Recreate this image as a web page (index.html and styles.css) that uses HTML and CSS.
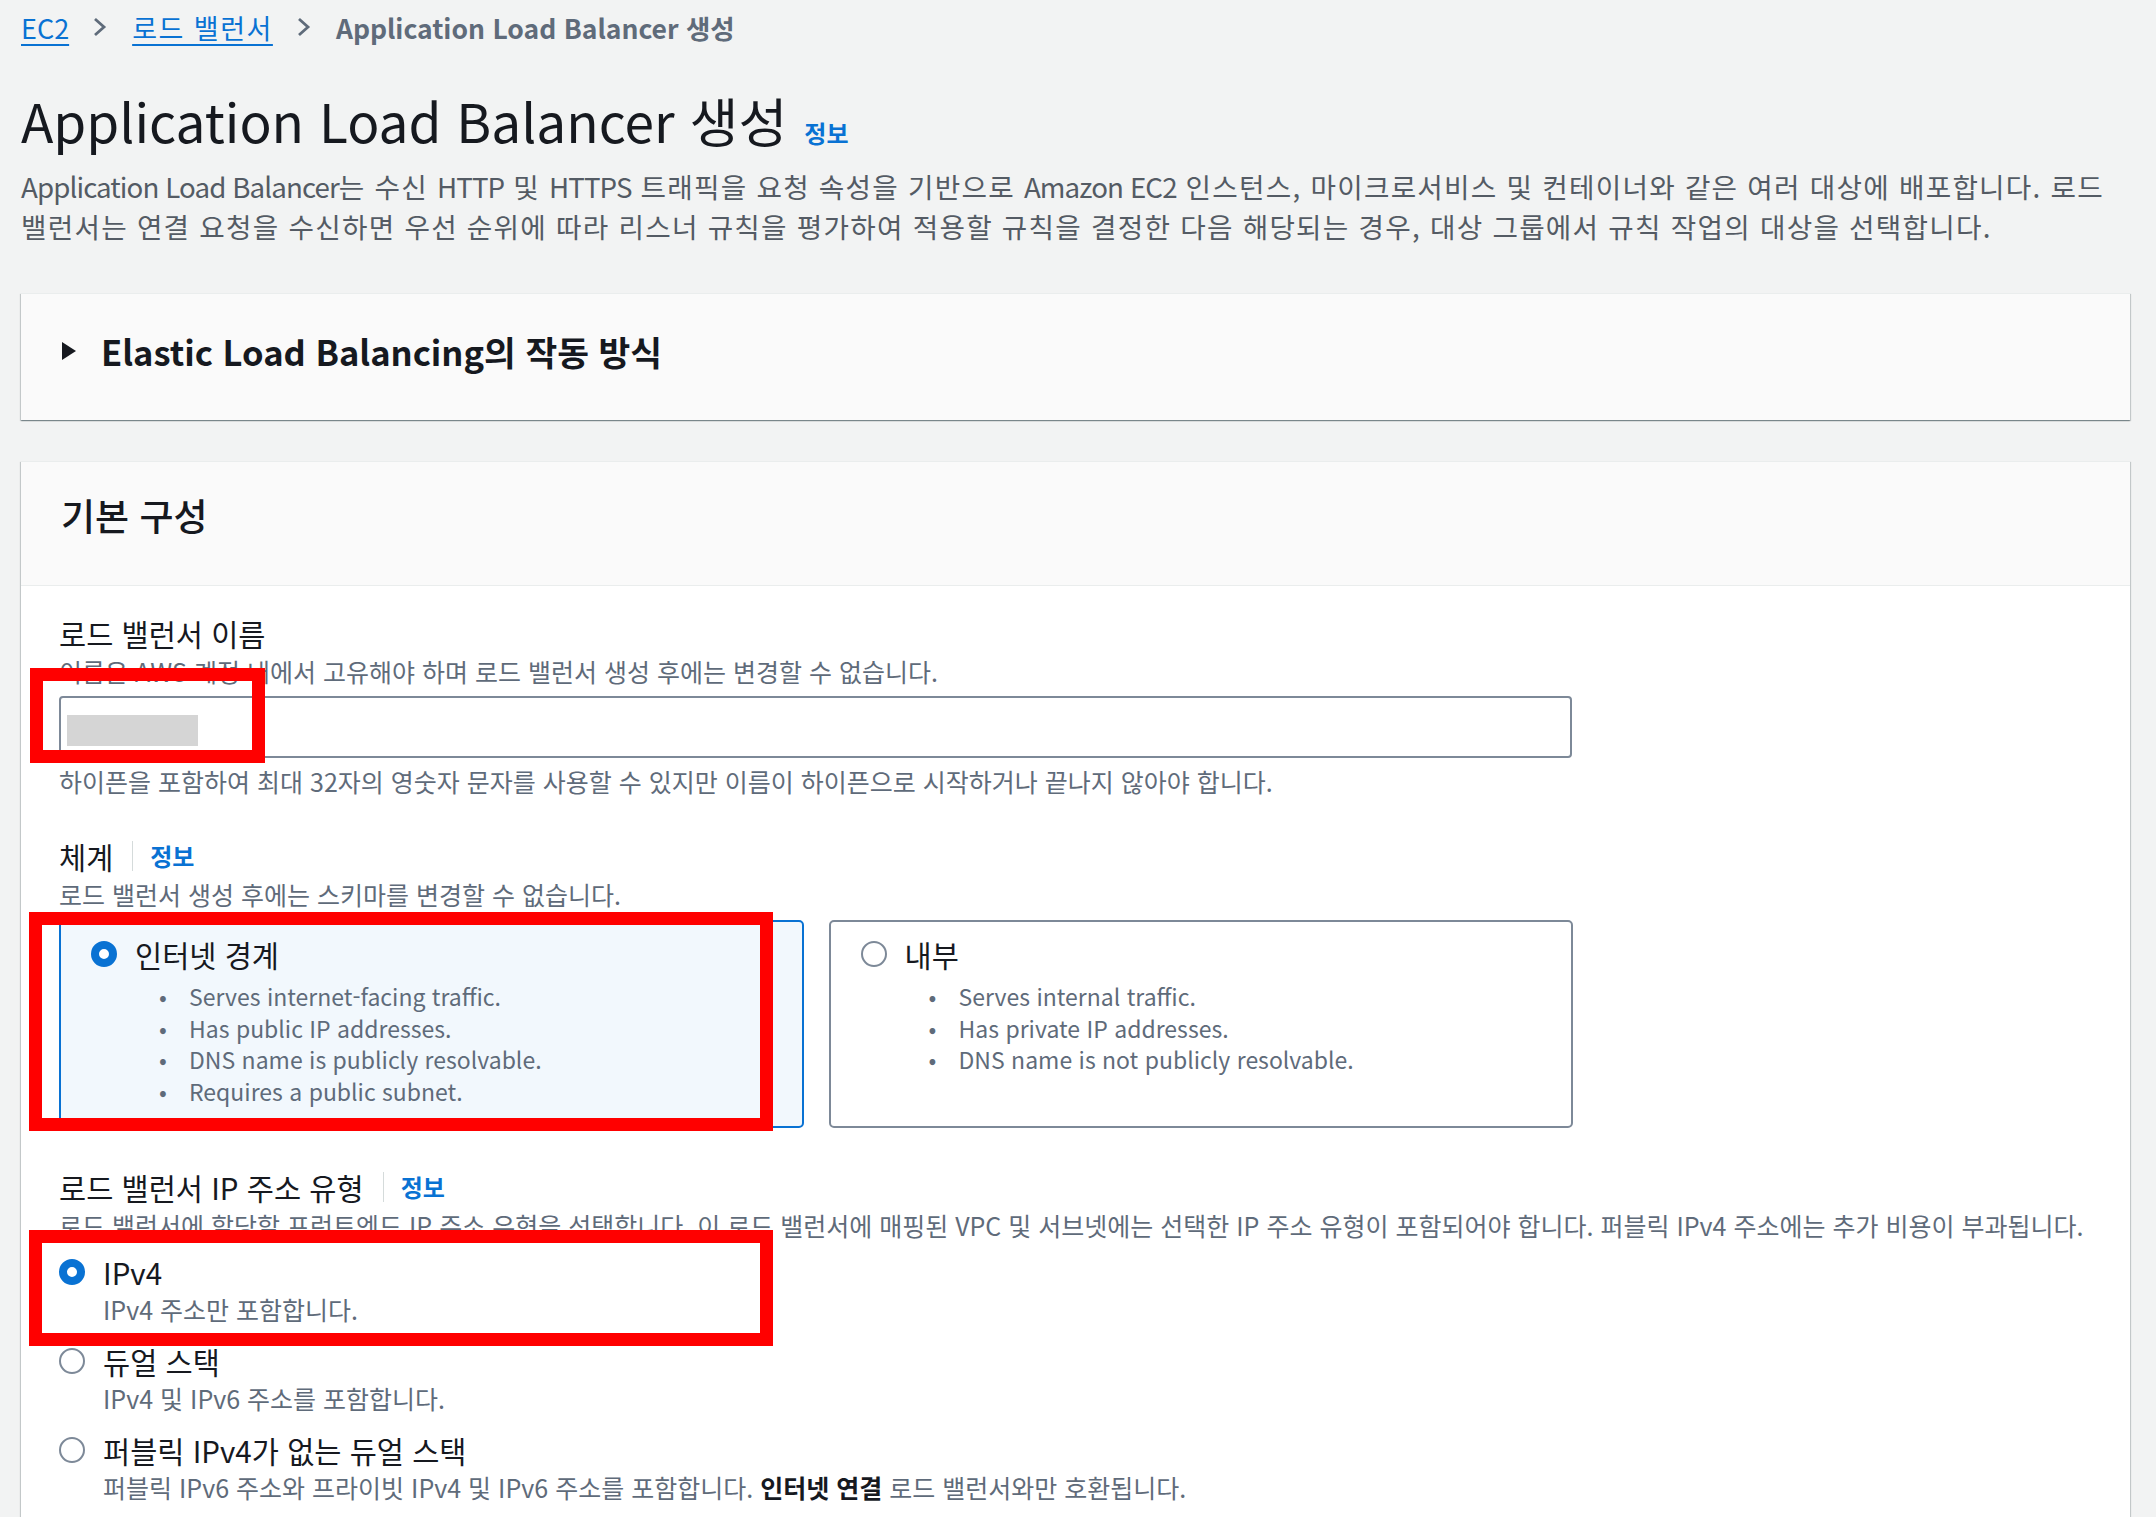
FILE: index.html
```html
<!DOCTYPE html>
<html lang="ko">
<head>
    <meta charset="UTF-8">
    <meta name="viewport" content="width=device-width, initial-scale=1.0">
    <title>Application Load Balancer 생성</title>
    <link rel="stylesheet" href="styles.css">
</head>
<body>
    <div class="page">
        <!-- 상단 경로 -->
        <nav class="breadcrumb">
            <a href="#">EC2</a>
            <svg class="sep" width="17" height="22" viewBox="0 0 17 22"><path d="M4 3 L13 11 L4 19" fill="none" stroke="#5f6b7a" stroke-width="2.8"/></svg>
            <a class="ko" href="#">로드 밸런서</a>
            <svg class="sep" width="17" height="22" viewBox="0 0 17 22"><path d="M4 3 L13 11 L4 19" fill="none" stroke="#5f6b7a" stroke-width="2.8"/></svg>
            <span class="current">Application Load Balancer 생성</span>
        </nav>

        <div class="page-header">
            <h1>Application Load Balancer 생성 <a class="info" href="#">정보</a></h1>
            <p class="page-desc"><span class="en">Application Load Balancer</span>는 수신 <span class="en">HTTP</span> 및 <span class="en">HTTPS</span> 트래픽을 요청 속성을 기반으로 <span class="en">Amazon EC2</span> 인스턴스, 마이크로서비스 및 컨테이너와 같은 여러 대상에 배포합니다. 로드<br>밸런서는 연결 요청을 수신하면 우선 순위에 따라 리스너 규칙을 평가하여 적용할 규칙을 결정한 다음 해당되는 경우, 대상 그룹에서 규칙 작업의 대상을 선택합니다.</p>
        </div>

        <div class="card expander">
            <svg class="caret" width="16" height="18" viewBox="0 0 16 18"><path d="M1 0 L15 9 L1 18 Z" fill="#16191f"/></svg>
            <h2>Elastic Load Balancing의 작동 방식</h2>
        </div>

        <div class="card">
            <div class="card-header">
                <h2>기본 구성</h2>
            </div>
            <div class="card-body">
                <!-- 이름 -->
                <div class="field">
                    <div class="label">로드 밸런서 이름</div>
                    <div class="desc">이름은 AWS 계정 내에서 고유해야 하며 로드 밸런서 생성 후에는 변경할 수 없습니다.</div>
                    <div class="input-wrap">
                        <div class="input"><span class="redacted"></span></div>
                        <div class="mark mark-name"></div>
                    </div>
                    <div class="hint">하이픈을 포함하여 최대 32자의 영숫자 문자를 사용할 수 있지만 이름이 하이픈으로 시작하거나 끝나지 않아야 합니다.</div>
                </div>

                <!-- 체계 -->
                <div class="field">
                    <div class="label">체계<span class="divider"></span><a class="info" href="#">정보</a></div>
                    <div class="desc">로드 밸런서 생성 후에는 스키마를 변경할 수 없습니다.</div>
                    <div class="tiles">
                        <div class="tile selected">
                            <div class="tile-title"><span class="radio checked"></span>인터넷 경계</div>
                            <ul>
                                <li>Serves internet-facing traffic.</li>
                                <li>Has public IP addresses.</li>
                                <li>DNS name is publicly resolvable.</li>
                                <li>Requires a public subnet.</li>
                            </ul>
                        </div>
                        <div class="tile">
                            <div class="tile-title"><span class="radio"></span>내부</div>
                            <ul>
                                <li>Serves internal traffic.</li>
                                <li>Has private IP addresses.</li>
                                <li>DNS name is not publicly resolvable.</li>
                            </ul>
                        </div>
                        <div class="mark mark-scheme"></div>
                    </div>
                </div>

                <!-- IP 주소 유형 -->
                <div class="field">
                    <div class="label">로드 밸런서 IP 주소 유형<span class="divider"></span><a class="info" href="#">정보</a></div>
                    <div class="desc">로드 밸런서에 할당할 프런트엔드 IP 주소 유형을 선택합니다. 이 로드 밸런서에 매핑된 VPC 및 서브넷에는 선택한 IP 주소 유형이 포함되어야 합니다. 퍼블릭 IPv4 주소에는 추가 비용이 부과됩니다.</div>
                    <div class="radio-group">
                        <div class="option">
                            <div class="option-title"><span class="radio checked"></span>IPv4</div>
                            <div class="option-desc">IPv4 주소만 포함합니다.</div>
                        </div>
                        <div class="option">
                            <div class="option-title"><span class="radio"></span>듀얼 스택</div>
                            <div class="option-desc">IPv4 및 IPv6 주소를 포함합니다.</div>
                        </div>
                        <div class="option">
                            <div class="option-title"><span class="radio"></span>퍼블릭 IPv4가 없는 듀얼 스택</div>
                            <div class="option-desc">퍼블릭 IPv6 주소와 프라이빗 IPv4 및 IPv6 주소를 포함합니다. <b>인터넷 연결</b> 로드 밸런서와만 호환됩니다.</div>
                        </div>
                        <div class="mark mark-ip"></div>
                    </div>
                </div>
            </div>
        </div>
    </div>
</body>
</html>
```

FILE: styles.css
```css
* {
    box-sizing: border-box;
}
body {
    margin: 0;
    background-color: #f2f3f3;
    font-family: "Noto Sans CJK KR", "Noto Sans", sans-serif;
    color: #16191f;
    overflow: hidden;
    word-break: keep-all;
}
.page {
    padding: 7px 26px 0 21px;
}

/* 상단 경로 */
.breadcrumb {
    display: flex;
    align-items: center;
    height: 40px;
    font-size: 27px;
}
.breadcrumb a {
    color: #0972d3;
    text-decoration: underline;
    text-underline-offset: 5px;
    text-decoration-thickness: 2px;
}
.breadcrumb a.ko {
    letter-spacing: 1.5px;
}
.breadcrumb .sep {
    flex: none;
    margin: 0 24px 0 22px;
}
.breadcrumb .current {
    color: #5f6b7a;
    font-weight: bold;
    font-size: 26.5px;
}

/* 제목 */
h1 {
    margin: 41px 0 0 0;
    font-size: 53.2px;
    font-weight: normal;
    line-height: 64px;
    color: #16191f;
}
.info {
    color: #0972d3;
    font-weight: bold;
    font-size: 24px;
    text-decoration: none;
}
h1 .info {
    line-height: 1;
    margin-left: 2px;
}
.page-desc {
    margin: 14px 0 0 0;
    font-size: 27.7px;
    line-height: 40px;
    letter-spacing: 1.25px;
    color: #545b64;
}
.page-desc .en {
    letter-spacing: -0.9px;
}

/* 카드 */
.card {
    background-color: #fff;
    box-shadow: 0 1px 1px 0 rgba(0, 28, 36, 0.3), 1px 1px 1px 0 rgba(0, 28, 36, 0.15), -1px 1px 1px 0 rgba(0, 28, 36, 0.15);
    border-top: 1px solid #eaeded;
}
.expander {
    margin-top: 47px;
    background-color: #fafafa;
    display: flex;
    align-items: center;
    padding: 35px 40px 47px 40px;
}
.expander .caret {
    flex: none;
    margin-right: 24px;
}
.expander h2 {
    margin: 0;
    font-size: 34.5px;
    line-height: 44px;
    font-weight: bold;
}
.card + .card {
    margin-top: 41px;
}
.card-header {
    background-color: #fafafa;
    border-bottom: 1px solid #eaeded;
    padding: 33px 40px 50px 40px;
}
.card-header h2 {
    margin: 0;
    font-size: 37px;
    line-height: 40px;
    font-weight: 500;
}
.card-body {
    padding: 29px 39px 40px 38px;
}

/* 입력 항목 */
.field + .field {
    margin-top: 41px;
}
.label {
    display: flex;
    align-items: center;
    font-size: 29.5px;
    line-height: 36px;
}
.divider {
    flex: none;
    display: inline-block;
    width: 1px;
    height: 30px;
    background-color: #d5dbdb;
    margin: 0 17px 0 19px;
}
.desc {
    margin-top: 4px;
    font-size: 25px;
    line-height: 32px;
    color: #5f6b7a;
}
.hint {
    margin-top: 7px;
    font-size: 25px;
    line-height: 32px;
    color: #5f6b7a;
}
.input-wrap {
    position: relative;
    width: 1513px;
    margin-top: 9px;
}
.input {
    height: 62px;
    border: 2px solid #7d8998;
    border-radius: 4px;
    background-color: #fff;
    padding: 17px 0 0 6px;
}
.redacted {
    display: block;
    width: 131px;
    height: 31px;
    background-color: #d5d5d5;
}

/* 체계 선택 */
.tiles {
    position: relative;
    display: grid;
    grid-template-columns: 1fr 1fr;
    gap: 25px;
    width: 1514px;
    margin-top: 10px;
}
.tile {
    border: 2px solid #7d8998;
    border-radius: 5px;
    height: 208px;
    padding: 14px 20px 0 30px;
}
.tile.selected {
    border-color: #0972d3;
    background-color: #f2f8fd;
}
.tile-title {
    display: flex;
    align-items: center;
    font-size: 29.5px;
    line-height: 36px;
}
.radio {
    flex: none;
    display: inline-block;
    width: 26px;
    height: 26px;
    border: 2px solid #7d8998;
    border-radius: 50%;
    background-color: #fff;
    margin-right: 18px;
}
.radio.checked {
    border: 8px solid #0972d3;
}
.tile ul {
    list-style: none;
    margin: 9px 0 0 0;
    padding: 0 0 0 68px;
}
.tile li {
    font-size: 23px;
    line-height: 31.7px;
    color: #5f6b7a;
}
.tile li::before {
    content: "•";
    display: inline-block;
    width: 30px;
    color: #5f6b7a;
}

/* IP 주소 유형 */
.radio-group {
    position: relative;
    margin-top: 13px;
}
.option + .option {
    margin-top: 18px;
}
.option-title {
    display: flex;
    align-items: center;
    font-size: 29.5px;
    line-height: 36px;
}
.option-desc {
    margin-top: 3px;
    padding-left: 44px;
    font-size: 25px;
    line-height: 32px;
    color: #5f6b7a;
}
.option-desc b {
    color: #16191f;
}

/* 빨간 표시 */
.mark {
    position: absolute;
    border: 13px solid #ff0000;
}
.mark-name {
    left: -29px;
    top: -28px;
    width: 235px;
    height: 95px;
}
.mark-scheme {
    left: -30px;
    top: -8px;
    width: 744px;
    height: 219px;
}
.mark-ip {
    left: -30px;
    top: -24px;
    width: 744px;
    height: 116px;
}
```
